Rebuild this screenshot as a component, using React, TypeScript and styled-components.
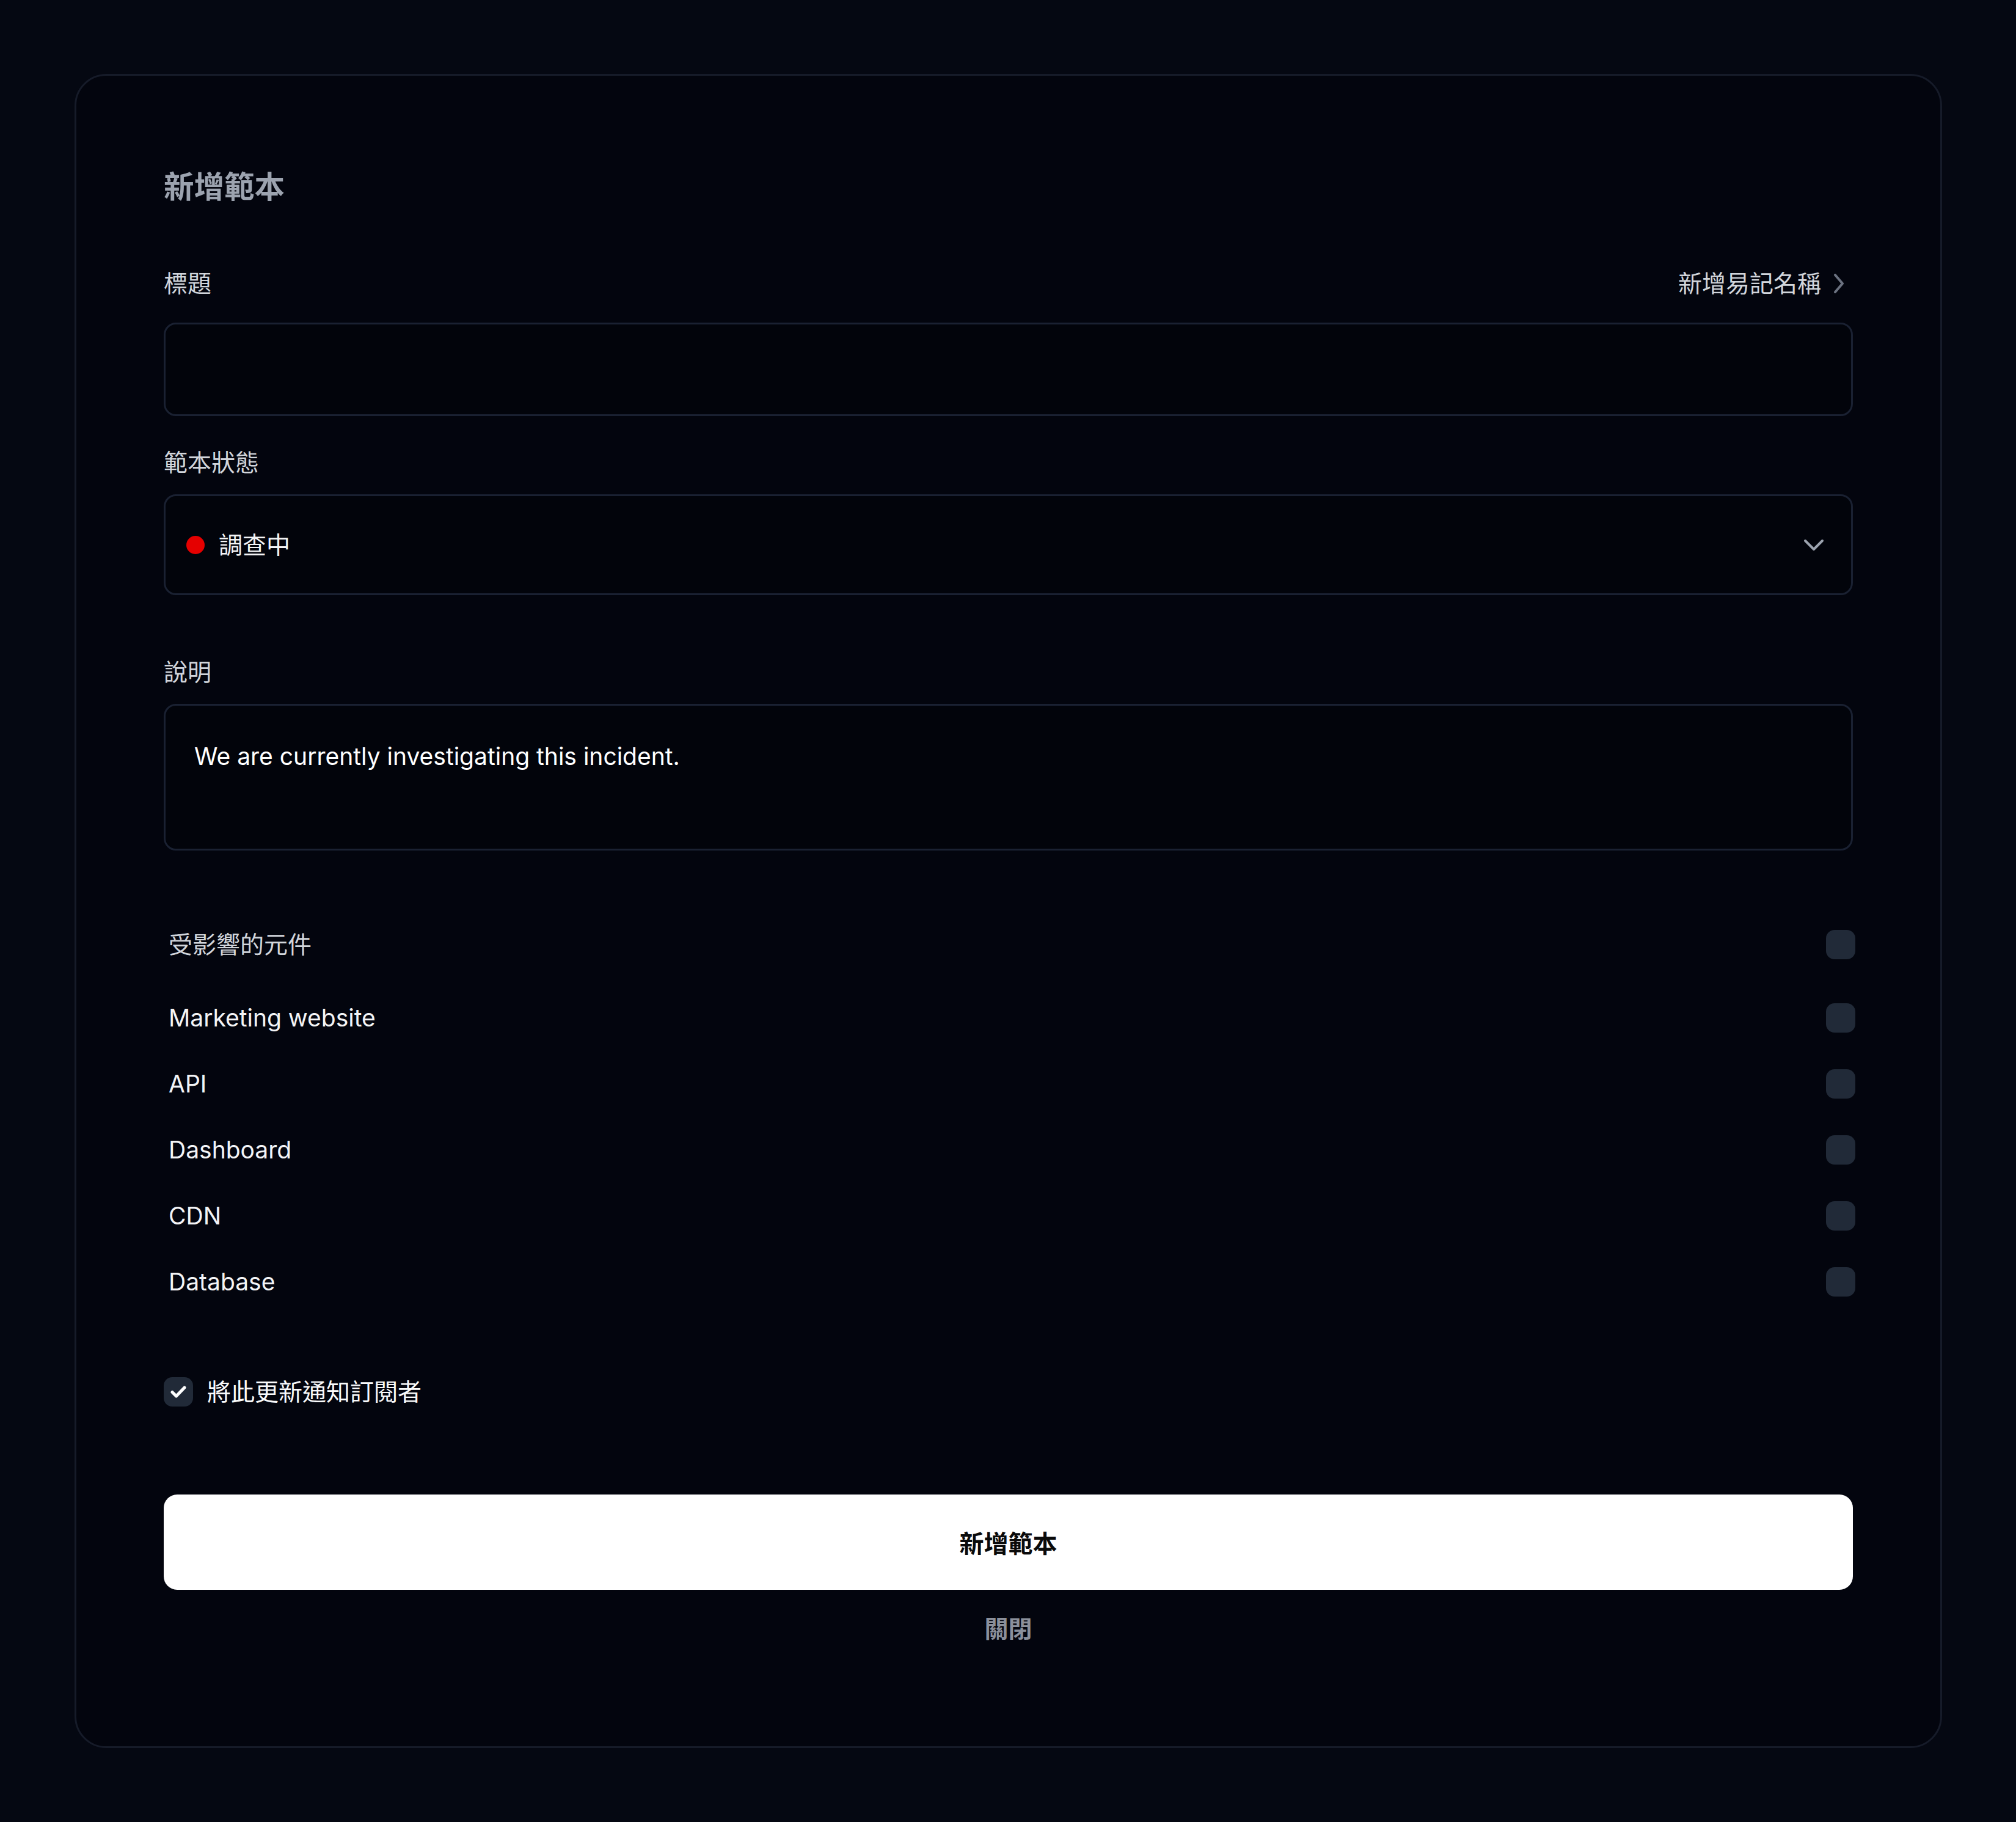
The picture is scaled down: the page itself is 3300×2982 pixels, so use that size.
import React from "react";
import styled, { createGlobalStyle } from "styled-components";

const GlobalStyle = createGlobalStyle`
  html, body {
    margin: 0;
    padding: 0;
    background: #050812;
  }
  * { box-sizing: border-box; }
  body {
    font-family: Inter, "Noto Sans CJK TC", "Noto Sans", sans-serif;
    -webkit-font-smoothing: antialiased;
  }
`;

const Page = styled.div`
  padding: 121px 121px 124px 122px;
  background: #050812;
`;

const Card = styled.div`
  border: 3px solid #161b29;
  border-radius: 52px;
  background: #03050e;
  padding: 150px 143px 164px 143px;
  display: flex;
  flex-direction: column;
`;

const Title = styled.h2`
  margin: 0;
  font-size: 49.5px;
  line-height: 64px;
  font-weight: 700;
  color: #9ca3af;
`;

const LabelRow = styled.div<{ $mt: number }>`
  margin-top: ${(p) => p.$mt}px;
  display: flex;
  align-items: center;
  justify-content: space-between;
  height: 56px;
`;

const Label = styled.span`
  font-size: 39px;
  line-height: 56px;
  color: #d1d5db;
`;

const SideLink = styled.span`
  display: flex;
  align-items: center;
  gap: 20px;
  font-size: 39px;
  line-height: 56px;
  color: #d1d5db;
  margin-right: 14px;
`;

const Field = styled.div<{ $mt: number; $h: number }>`
  margin-top: ${(p) => p.$mt}px;
  height: ${(p) => p.$h}px;
  border: 3px solid #1a2132;
  border-radius: 20px;
  background: #02040b;
`;

const SelectField = styled(Field)`
  display: flex;
  align-items: center;
  padding: 0 44px 0 34px;
`;

const Dot = styled.span`
  width: 30px;
  height: 30px;
  border-radius: 50%;
  background: #e50000;
  flex: none;
`;

const SelectText = styled.span`
  margin-left: 23px;
  font-size: 39px;
  line-height: 56px;
  color: #f3f4f6;
  flex: 1;
`;

const TextArea = styled(Field)`
  padding: 55px 47px;
  font-size: 39px;
  line-height: 56px;
  color: #ffffff;
`;

const List = styled.div`
  margin-top: 100px;
  display: flex;
  flex-direction: column;
  margin-right: -4px;
`;

const Row = styled.div<{ $mb?: number }>`
  height: 108px;
  display: flex;
  align-items: center;
  justify-content: space-between;
  padding-left: 8px;
  margin-bottom: ${(p) => p.$mb ?? 0}px;
`;

const RowText = styled.span<{ $muted?: boolean }>`
  font-size: 39px;
  line-height: 56px;
  color: ${(p) => (p.$muted ? "#d1d5db" : "#f3f4f6")};
`;

const Box = styled.span`
  width: 48px;
  height: 48px;
  border-radius: 14px;
  background: #212a38;
  display: flex;
  align-items: center;
  justify-content: center;
  flex: none;
`;

const Notify = styled.div`
  margin-top: 98px;
  display: flex;
  align-items: center;
  gap: 23px;
  height: 56px;
`;

const NotifyText = styled.span`
  font-size: 39px;
  line-height: 56px;
  color: #f9fafb;
`;

const PrimaryButton = styled.button`
  margin-top: 140px;
  height: 156px;
  width: 100%;
  border: none;
  border-radius: 22px;
  background: #ffffff;
  color: #0a0a0a;
  font-family: inherit;
  font-size: 40px;
  font-weight: 600;
  cursor: pointer;
`;

const CloseButton = styled.button`
  margin-top: 36px;
  align-self: center;
  background: none;
  border: none;
  padding: 0;
  font-family: inherit;
  font-size: 39px;
  line-height: 56px;
  font-weight: 700;
  color: #8b909b;
  cursor: pointer;
`;

const components = ["Marketing website", "API", "Dashboard", "CDN", "Database"];

export default function App() {
  return (
    <>
      <GlobalStyle />
      <Page>
        <Card>
          <Title>新增範本</Title>

          <LabelRow $mt={98}>
            <Label>標題</Label>
            <SideLink>
              新增易記名稱
              <svg width="18" height="32" viewBox="0 0 18 32" fill="none">
                <path d="M3 2 L15 16 L3 30" stroke="#6b7280" strokeWidth="4" strokeLinecap="round" strokeLinejoin="round" />
              </svg>
            </SideLink>
          </LabelRow>
          <Field $mt={36} $h={153} />

          <LabelRow $mt={48}>
            <Label>範本狀態</Label>
          </LabelRow>
          <SelectField $mt={24} $h={165}>
            <Dot />
            <SelectText>調查中</SelectText>
            <svg width="34" height="20" viewBox="0 0 34 20" fill="none">
              <path d="M3 3 L17 17 L31 3" stroke="#9ca3af" strokeWidth="4" strokeLinecap="round" strokeLinejoin="round" />
            </svg>
          </SelectField>

          <LabelRow $mt={98}>
            <Label>說明</Label>
          </LabelRow>
          <TextArea $mt={24} $h={240}>
            We are currently investigating this incident.
          </TextArea>

          <List>
            <Row $mb={12}>
              <RowText $muted>受影響的元件</RowText>
              <Box />
            </Row>
            {components.map((c) => (
              <Row key={c}>
                <RowText>{c}</RowText>
                <Box />
              </Row>
            ))}
          </List>

          <Notify>
            <Box>
              <svg width="28" height="22" viewBox="0 0 28 22" fill="none">
                <path d="M4 11.5 L10.5 18 L24 4" stroke="#ffffff" strokeWidth="5" strokeLinecap="round" strokeLinejoin="round" />
              </svg>
            </Box>
            <NotifyText>將此更新通知訂閱者</NotifyText>
          </Notify>

          <PrimaryButton>新增範本</PrimaryButton>
          <CloseButton>關閉</CloseButton>
        </Card>
      </Page>
    </>
  );
}
